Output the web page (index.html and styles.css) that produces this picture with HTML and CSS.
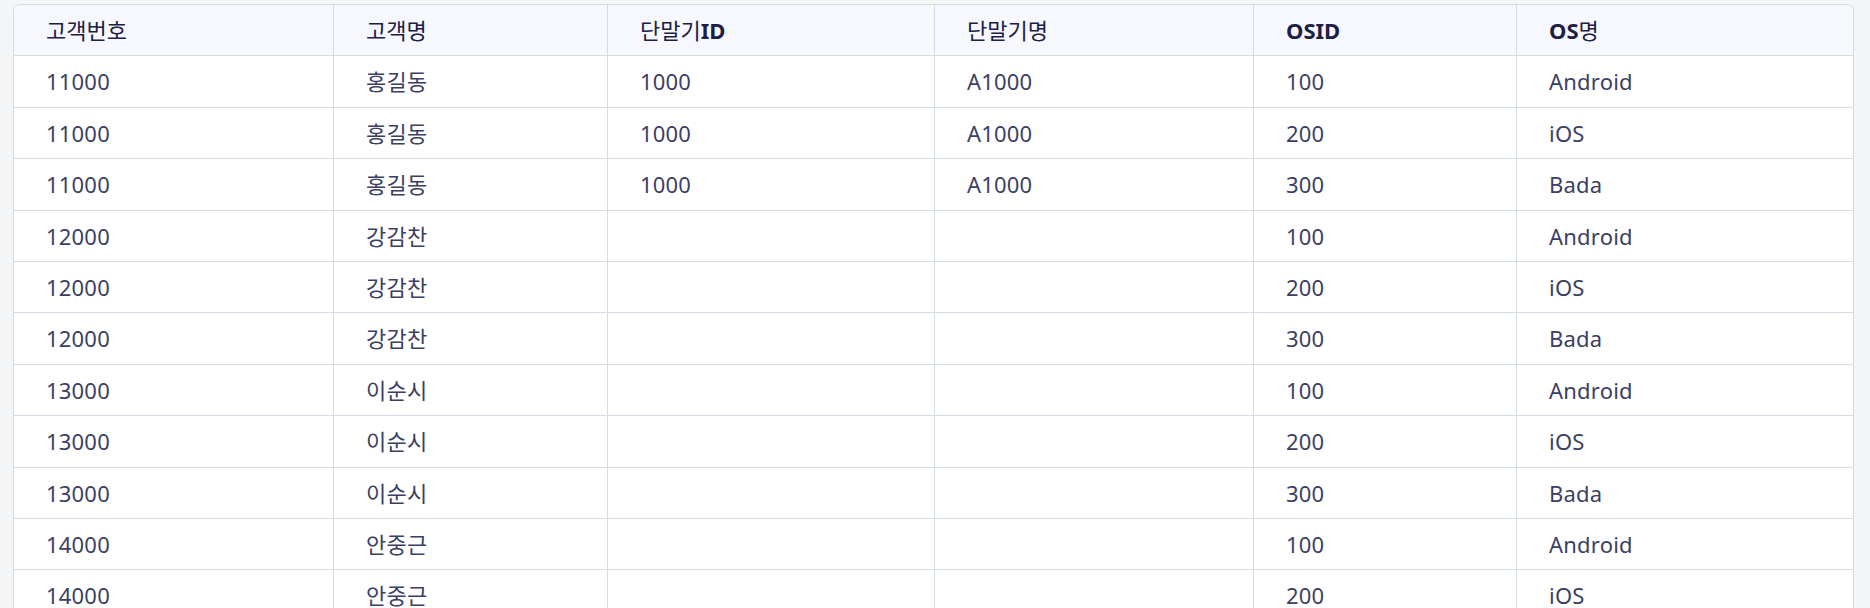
FILE: index.html
```html
<!DOCTYPE html>
<html lang="ko">
<head>
<meta charset="utf-8">
<link rel="stylesheet" href="styles.css">
</head>
<body>
<div class="page">
  <div class="table-wrap">
    <table class="grid">
      <colgroup>
        <col class="c1"><col class="c2"><col class="c3"><col class="c4"><col class="c5"><col class="c6">
      </colgroup>
      <thead>
        <tr><th>고객번호</th><th>고객명</th><th>단말기<span class="lat">ID</span></th><th>단말기명</th><th><span class="lat">OSID</span></th><th><span class="lat">OS</span>명</th></tr>
      </thead>
      <tbody>
        <tr><td>11000</td><td>홍길동</td><td>1000</td><td>A1000</td><td>100</td><td>Android</td></tr>
        <tr><td>11000</td><td>홍길동</td><td>1000</td><td>A1000</td><td>200</td><td>iOS</td></tr>
        <tr><td>11000</td><td>홍길동</td><td>1000</td><td>A1000</td><td>300</td><td>Bada</td></tr>
        <tr><td>12000</td><td>강감찬</td><td></td><td></td><td>100</td><td>Android</td></tr>
        <tr><td>12000</td><td>강감찬</td><td></td><td></td><td>200</td><td>iOS</td></tr>
        <tr><td>12000</td><td>강감찬</td><td></td><td></td><td>300</td><td>Bada</td></tr>
        <tr><td>13000</td><td>이순시</td><td></td><td></td><td>100</td><td>Android</td></tr>
        <tr><td>13000</td><td>이순시</td><td></td><td></td><td>200</td><td>iOS</td></tr>
        <tr><td>13000</td><td>이순시</td><td></td><td></td><td>300</td><td>Bada</td></tr>
        <tr><td>14000</td><td>안중근</td><td></td><td></td><td>100</td><td>Android</td></tr>
        <tr><td>14000</td><td>안중근</td><td></td><td></td><td>200</td><td>iOS</td></tr>
      </tbody>
    </table>
  </div>
</div>
</body>
</html>
```
FILE: styles.css
```css
html, body {
  margin: 0;
  padding: 0;
  background: #f4f5f7;
}
.page {
  padding: 4px 16px 0 13px;
  font-family: "Noto Sans", "Noto Sans CJK KR", sans-serif;
  font-size: 22px;
  color: #3b3f64;
}
.table-wrap {
  border: 1px solid #d3dbe5;
  border-radius: 7px;
  overflow: hidden;
  background: #ffffff;
}
.grid {
  width: 100%;
  table-layout: fixed;
  border-collapse: separate;
  border-spacing: 0;
}
.c1 { width: 319px; }
.c2 { width: 274px; }
.c3 { width: 327px; }
.c4 { width: 319px; }
.c5 { width: 263px; }
.c6 { width: 337px; }
.grid th,
.grid td {
  box-sizing: border-box;
  padding: 12px 32px;
  line-height: 26.4px;
  text-align: left;
  border-bottom: 1px solid #d3dbe5;
  white-space: nowrap;
}
.grid th + th,
.grid td + td {
  border-left: 1px solid #d3dbe5;
}
.grid th {
  background: #f7f8fd;
  color: #1c2046;
  font-weight: 400;
}
.grid th .lat {
  font-weight: 700;
}
.grid td {
  font-weight: 400;
  letter-spacing: 0.2px;
}
```
